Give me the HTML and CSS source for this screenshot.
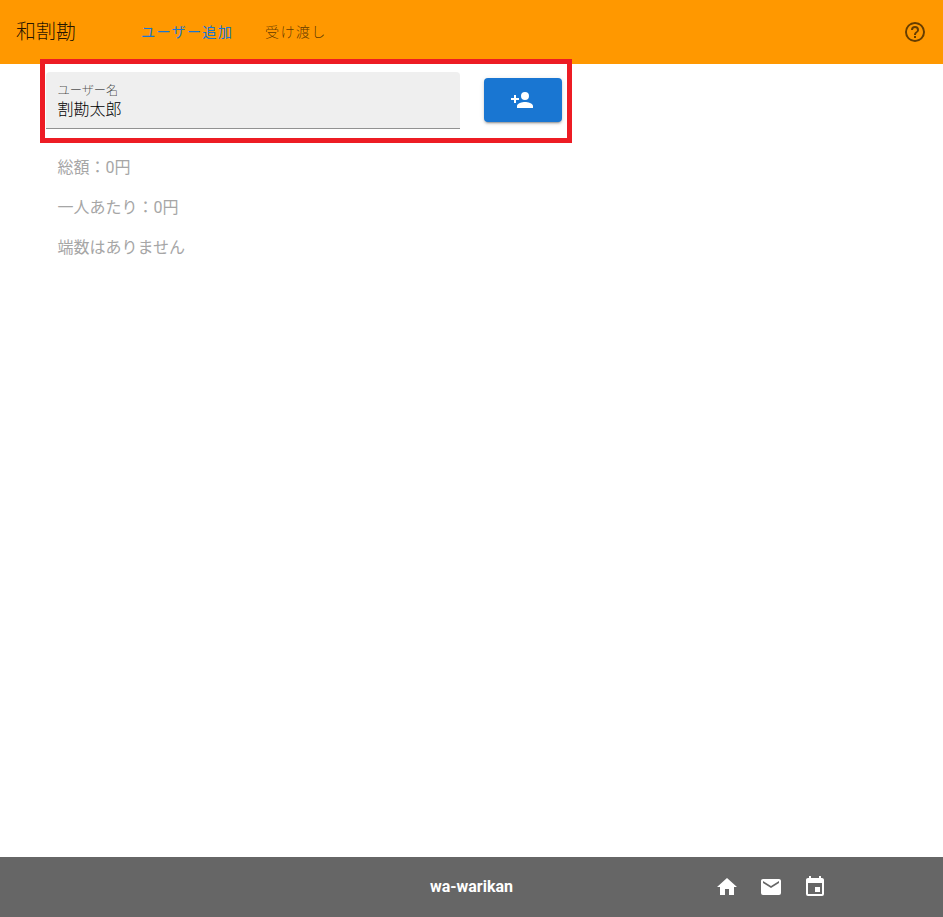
FILE: index.html
```html
<!DOCTYPE html>
<html lang="ja">
<head>
<meta charset="utf-8">
<title>和割勘</title>
<link rel="stylesheet" href="styles.css">
</head>
<body>
<div class="app">
  <header class="bar">
    <h1 class="brand">和割勘</h1>
    <nav class="tabs">
      <a class="tab tab-active">ユーザー追加</a>
      <a class="tab">受け渡し</a>
    </nav>
    <svg class="icon help" viewBox="0 0 24 24"><path d="M11,18H13V16H11V18M12,2A10,10 0 0,0 2,12A10,10 0 0,0 12,22A10,10 0 0,0 22,12A10,10 0 0,0 12,2M12,20C7.59,20 4,16.41 4,12C4,7.59 7.59,4 12,4C16.41,4 20,7.59 20,12C20,16.41 16.41,20 12,20M12,6A4,4 0 0,0 8,10H10A2,2 0 0,1 12,8A2,2 0 0,1 14,10C14,12 11,11.75 11,15H13C13,12.75 16,12.5 16,10A4,4 0 0,0 12,6Z"/></svg>
  </header>
  <main class="content">
    <div class="form">
      <div class="field">
        <span class="label">ユーザー名</span>
        <span class="value">割勘太郎</span>
      </div>
      <button class="add" aria-label="追加">
        <svg class="icon" viewBox="0 0 24 24"><path d="M15,14C12.33,14 7,15.33 7,18V20H23V18C23,15.33 17.67,14 15,14M6,10V7H4V10H1V12H4V15H6V12H9V10M15,12A4,4 0 0,0 19,8A4,4 0 0,0 15,4A4,4 0 0,0 11,8A4,4 0 0,0 15,12Z"/></svg>
      </button>
      <div class="highlight"></div>
    </div>
    <div class="summary">
      <p>総額：0円</p>
      <p>一人あたり：0円</p>
      <p>端数はありません</p>
    </div>
  </main>
  <footer class="footer">
    <span></span>
    <strong class="name">wa-warikan</strong>
    <div class="links">
      <svg class="icon" viewBox="0 0 24 24"><path d="M10,20V14H14V20H19V12H22L12,3L2,12H5V20H10Z"/></svg>
      <svg class="icon" viewBox="0 0 24 24"><path d="M20,8L12,13L4,8V6L12,11L20,6M20,4H4C2.89,4 2,4.89 2,6V18A2,2 0 0,0 4,20H20A2,2 0 0,0 22,18V6C22,4.89 21.1,4 20,4Z"/></svg>
      <svg class="icon" viewBox="0 0 24 24"><path d="M19,19H5V8H19M16,1V3H8V1H6V3H5C3.89,3 3,3.89 3,5V19A2,2 0 0,0 5,21H19A2,2 0 0,0 21,19V5C21,3.89 20.1,3 19,3H18V1M17,12H12V17H17V12Z"/></svg>
    </div>
  </footer>
</div>
</body>
</html>
```
FILE: styles.css
```css
* { box-sizing: border-box; }
body {
  margin: 0;
  background: #fff;
  color: rgba(0, 0, 0, .87);
  font-family: Roboto, "Noto Sans CJK JP", sans-serif;
  font-size: 16px;
  font-weight: 300;
}
.app { display: flex; flex-direction: column; height: 100vh; }
.icon { display: block; width: 24px; height: 24px; fill: currentColor; }
.bar {
  display: flex;
  align-items: center;
  flex: 0 0 64px;
  padding: 0 16px;
  background: #ff9800;
}
.brand { width: 109px; margin: 0; font-size: 20px; font-weight: 300; line-height: 30px; }
.tabs { display: flex; }
.tab {
  padding: 0 16px;
  color: rgba(0, 0, 0, .65);
  font-size: 14.2px;
  letter-spacing: 1.2px;
  line-height: 20px;
}
.tab-active { color: #1976d2; font-weight: 400; }
.help { margin-left: auto; color: rgba(0, 0, 0, .6); }
.content { flex: 1; padding: 8px 46px; }
.form { position: relative; display: flex; width: 516px; height: 57px; }
.field {
  display: flex;
  flex-direction: column;
  width: 414px;
  padding: 11px 12px 0 11.5px;
  background: #efefef;
  border-bottom: 1px solid #919191;
  border-radius: 4px 4px 0 0;
}
.label { color: rgba(0, 0, 0, .7); font-size: 12.2px; line-height: 16px; }
.value { color: #000; line-height: 21px; }
.add {
  display: flex;
  align-items: center;
  justify-content: center;
  width: 78px;
  height: 44px;
  margin: 6px 0 0 24px;
  padding: 0 2px 0 0;
  border: 0;
  border-radius: 4px;
  background: #1976d2;
  color: #fff;
  box-shadow: 0 3px 1px -2px rgba(0, 0, 0, .2), 0 2px 2px rgba(0, 0, 0, .14), 0 1px 5px rgba(0, 0, 0, .12);
}
.highlight {
  position: absolute;
  left: -6px;
  top: -13px;
  width: 532px;
  height: 84px;
  border: 5px solid #ed1c24;
}
.summary { padding: 27px 0 0 11.5px; color: #a6a6a6; font-weight: 400; }
.summary p { margin: 0 0 16px; line-height: 24px; }
.footer {
  display: grid;
  grid-template-columns: 1fr auto 1fr;
  align-items: center;
  flex: 0 0 60px;
  background: #666;
  color: #fff;
}
.name { padding-bottom: 2px; font-weight: 700; }
.links { display: flex; justify-content: flex-end; gap: 20px; padding-right: 116px; }
```
